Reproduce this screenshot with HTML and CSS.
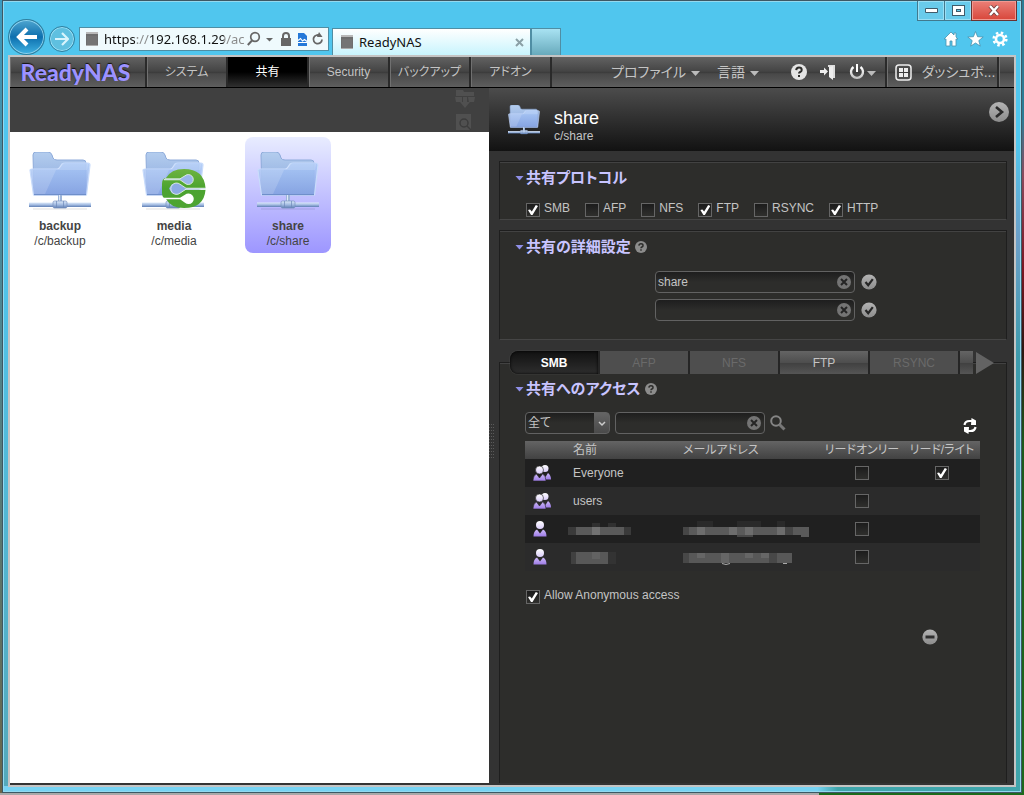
FILE: index.html
```html
<!DOCTYPE html>
<html lang="ja">
<head>
    <meta charset="UTF-8">
    <meta name="viewport" content="width=device-width, initial-scale=1.0">
    <title>ReadyNAS</title>
    <link rel="stylesheet" href="styles.css">
</head>
<body>

    <!-- shared icons -->
    <svg class="defs" aria-hidden="true">
        <defs>
            <linearGradient id="g-back" x1="0" y1="0" x2="0" y2="1">
                <stop offset="0" stop-color="#b4cdee"/>
                <stop offset="1" stop-color="#86a5dc"/>
            </linearGradient>
            <linearGradient id="g-front" x1="0" y1="0" x2="0" y2="1">
                <stop offset="0" stop-color="#a9c8f7"/>
                <stop offset="1" stop-color="#86a3e3"/>
            </linearGradient>
            <linearGradient id="g-bar" x1="0" y1="0" x2="0" y2="1">
                <stop offset="0" stop-color="#dce9fa"/>
                <stop offset="0.5" stop-color="#a5bde2"/>
                <stop offset="1" stop-color="#5f7fb5"/>
            </linearGradient>
            <linearGradient id="g-green" x1="0" y1="0" x2="0" y2="1">
                <stop offset="0" stop-color="#6db33f"/>
                <stop offset="0.5" stop-color="#4ba32f"/>
                <stop offset="1" stop-color="#4ea432"/>
            </linearGradient>
            <linearGradient id="g-gray" x1="0" y1="0" x2="0" y2="1">
                <stop offset="0" stop-color="#b4b4b4"/>
                <stop offset="1" stop-color="#8c8c8c"/>
            </linearGradient>
            <linearGradient id="g-head" x1="0" y1="0" x2="0" y2="1">
                <stop offset="0" stop-color="#ffffff"/>
                <stop offset="1" stop-color="#d9cbfa"/>
            </linearGradient>
            <linearGradient id="g-user" x1="0" y1="0" x2="0" y2="1">
                <stop offset="0" stop-color="#cdbaf8"/>
                <stop offset="1" stop-color="#9d7be6"/>
            </linearGradient>
            <linearGradient id="g-silver" x1="0" y1="0" x2="0" y2="1">
                <stop offset="0" stop-color="#ffffff"/>
                <stop offset="1" stop-color="#c4c4c4"/>
            </linearGradient>
        </defs>
        <symbol id="i-folder" viewBox="0 0 62 58">
            <path d="M4 3q0-3 3-3h12q3 0 4 3l1 3q1 2 4 2h26q3 0 3 3v32H5z" fill="url(#g-back)" stroke="#8eabda" stroke-width="1"/>
            <path d="M1 18q0-1 2-1h25q2 0 3-2l2-3q1-1 3-1h23q2 0 2 2L57.500 43H4.500z" fill="url(#g-front)" fill-opacity=".85" stroke="#c9dcfb" stroke-width="1.200"/>
            <path d="M2 18h26l5-6h26l-1 6H27L16 42H5z" fill="#fff" fill-opacity=".16"/>
            <path d="M5 42.500h52" stroke="#6f8fca"/>
            <path d="M29 43h4v8h-4z" fill="#9db5da"/>
            <path d="M30 43h1v8h-1z" fill="#dfe9f7"/>
            <path d="M0 50.500h62v4.500H0z" fill="url(#g-bar)"/>
            <rect x="24" y="49" width="14" height="7" rx="1.500" fill="url(#g-bar)" stroke="#7892bf" stroke-width=".7"/>
            <path d="M27.500 49v7M34.500 49v7" stroke="#6d88b8" stroke-width=".7"/>
            <path d="M4 57h54" stroke="#000" stroke-opacity=".12"/>
        </symbol>
        <symbol id="i-media" viewBox="0 0 64 58">
            <use href="#i-folder" width="62" height="58"/>
            <path d="M20 32q0-6 4-6 5-9 18-9 20 0 21.500 19H40l-3-4h-7l-3 4.500 3 5h7l3-3.500h23.500Q62 56 42 56q-13 0-18-9-4-1-4-6z" fill="url(#g-green)"/>
            <path d="M23 26.800h15l5-3a5 5 0 1 1 0 7.500l-5-3.500H22z" fill="#9bb7ea" stroke="#eef7e8" stroke-width=".8"/>
            <path d="M63.500 36.200H44l-6-4a5.700 5.700 0 1 0 0 9l6-4h19.500z" fill="#8dabe4" stroke="#eef7e8" stroke-width=".8"/>
            <path d="M20 45.800h18l5-3a5.300 5.300 0 1 1 0 8l-5-3.500H23z" fill="#fff"/>
        </symbol>
        <symbol id="i-help" viewBox="0 0 16 16">
            <circle cx="8" cy="8" r="8" fill="currentColor"/>
            <path d="M5.200 6.200Q5.400 3.600 8 3.600t2.700 2.300Q10.700 7.400 9.200 8 8 8.600 8 9.600" fill="none" stroke="#2d2d2b" stroke-width="2"/>
            <path d="M7 11h2v2H7z" fill="#2d2d2b"/>
        </symbol>
        <symbol id="i-clear" viewBox="0 0 14 14">
            <circle cx="7" cy="7" r="7" fill="#747474"/>
            <path d="M4 4l6 6M10 4l-6 6" stroke="#252525" stroke-width="2"/>
        </symbol>
        <symbol id="i-apply" viewBox="0 0 16 16">
            <circle cx="8" cy="8" r="7.600" fill="url(#g-gray)"/>
            <path d="M4.500 8l2.700 3.200 4.600-6" fill="none" stroke="#262626" stroke-width="2.200"/>
        </symbol>
        <symbol id="i-user" viewBox="0 0 14 18">
            <path d="M.5 16.500q0-5.500 3.500-7l3 4 3-4q3.500 1.500 3.500 7z" fill="url(#g-user)"/>
            <circle cx="7" cy="5" r="4" fill="url(#g-head)"/>
        </symbol>
        <symbol id="i-group" viewBox="0 0 18 18">
            <circle cx="12" cy="4.500" r="3.500" fill="url(#g-head)"/>
            <path d="M9 15.500V10l3.500 3L15 9q3 2 3 6.500z" fill="url(#g-user)"/>
            <path d="M0 17q0-5.500 3.500-7l3 4 3-4Q13 11.500 13 17z" fill="url(#g-user)" stroke="#222" stroke-width=".6"/>
            <circle cx="6.500" cy="6" r="4" fill="url(#g-head)" stroke="#222" stroke-width=".6"/>
        </symbol>
        <symbol id="i-nas" viewBox="0 0 12 16">
            <path d="M0 2h12v13H0z" fill="#6e6e6e"/>
            <path d="M0 1h12v2H0z" fill="#b9b9b9"/>
            <path d="M2 5v9M4 5v9M6 5v9M8 5v9M10 5v9" stroke="#858585" stroke-width=".6"/>
            <path d="M0 14.500h12" stroke="#aaa"/>
        </symbol>
    </svg>

    <div class="window">

        <header class="browser">
            <div class="browser-nav">
                <button class="back" aria-label="戻る">
                    <svg width="22" height="20" viewBox="0 0 22 20"><path d="M11 2L3 10l8 8M3.500 10H21" fill="none" stroke="#fff" stroke-width="4"/></svg>
                </button>
                <button class="forward" aria-label="進む">
                    <svg width="14" height="14" viewBox="0 0 14 14"><path d="M7 1l6 6-6 6M12.500 7H0" fill="none" stroke="#d8f4fc" stroke-width="2.200"/></svg>
                </button>
                <div class="address">
                    <svg width="12" height="16"><use href="#i-nas"/></svg>
                    <input type="text" class="url" value="https://192.168.1.29/ac" aria-label="アドレス">
                    <svg width="76" height="16" viewBox="0 0 76 16" fill="none">
                        <circle cx="8" cy="6" r="4.300" stroke="#666" stroke-width="1.700"/>
                        <path d="M5 9.500L.8 14" stroke="#666" stroke-width="2"/>
                        <path d="M19 7h7l-3.500 3.500z" fill="#666"/>
                        <path d="M34 7h10v8H34z" fill="#666"/>
                        <path d="M36 8V5q0-3 3-3t3 3v3" stroke="#666" stroke-width="2"/>
                        <path d="M51 2h6l3 3v10H51z" fill="#2478d8"/>
                        <path d="M51 9.500l2.500-2 2 2.500 2-1.500 2.500 2M51 11.500h9" stroke="#fff" stroke-width="1.200"/>
                        <path d="M75 8.500a4.300 4.300 0 1 1-2-3.800" stroke="#666" stroke-width="1.800"/>
                        <path d="M72 1l3.500 5H70z" fill="#666"/>
                    </svg>
                </div>
                <div class="tab">
                    <svg width="12" height="16"><use href="#i-nas"/></svg>
                    <span>ReadyNAS</span>
                    <button aria-label="タブを閉じる">
                        <svg width="9" height="9" viewBox="0 0 9 9"><path d="M1 1l7 7M8 1L1 8" stroke="#8ba0a6" stroke-width="2"/></svg>
                    </button>
                </div>
                <button class="new-tab" aria-label="新しいタブ"></button>
            </div>
            <div class="browser-right">
                <div class="caption">
                    <button aria-label="最小化"><svg width="13" height="5" viewBox="0 0 13 5"><path d="M.5.500h12v4H.5z" fill="#fff" stroke="#3f5b6a"/></svg></button>
                    <button aria-label="最大化"><svg width="13" height="11" viewBox="0 0 13 11"><path d="M2.500 2.500h8v6h-8z" fill="none" stroke="#3f5b6a" stroke-width="5"/><path d="M2.500 2.500h8v6h-8z" fill="none" stroke="#fff" stroke-width="3"/><path d="M4.500 4.500h4v2h-4z" fill="none" stroke="#3f5b6a"/></svg></button>
                    <button class="close" aria-label="閉じる"><svg width="12" height="11" viewBox="0 0 12 11"><path d="M2 1l8 9M10 1L2 10" stroke="#6d3b3b" stroke-width="4"/><path d="M2 1l8 9M10 1L2 10" stroke="#fff" stroke-width="2.500"/></svg></button>
                </div>
                <div class="tools">
                    <svg width="16" height="16" viewBox="0 0 16 16"><path d="M8 1L1 8h2v7h4v-5h2v5h4V8h2l-2-2V2h-2v2z" fill="#fff" stroke="#4a92ad" stroke-width=".8"/></svg>
                    <svg width="17" height="16" viewBox="0 0 17 16"><path d="M8.500.500l2.100 5.200 5.600.3-4.400 3.600 1.500 5.500-4.800-3.100-4.800 3.100 1.500-5.500L.8 6l5.600-.3z" fill="#fff" stroke="#4a92ad" stroke-width=".8"/></svg>
                    <svg width="16" height="16" viewBox="0 0 16 16"><circle cx="8" cy="8" r="6.300" fill="none" stroke="#fff" stroke-width="2.600" stroke-dasharray="2.470 2.480"/><circle cx="8" cy="8" r="4" fill="none" stroke="#fff" stroke-width="2.600"/></svg>
                </div>
            </div>
        </header>

        <main class="app">
            <nav class="menu">
                <a href="#" class="logo">ReadyNAS</a>
                <a href="#">システム</a>
                <a href="#" class="active">共有</a>
                <a href="#">Security</a>
                <a href="#">バックアップ</a>
                <a href="#">アドオン</a>
                <div class="menu-right">
                    <button class="profile">プロファイル <i class="caret"></i></button>
                    <button class="language">言語 <i class="caret"></i></button>
                    <button class="help" aria-label="ヘルプ"><svg width="16" height="16"><use href="#i-help"/></svg></button>
                    <button aria-label="ログアウト">
                        <svg width="16" height="16" viewBox="0 0 16 16"><path d="M8 1h7v13h-2V3H8z" fill="#ddd"/><path d="M9 3l4-1v14l-4-3zM0 6h4V3.500L8 7.500l-4 4V9H0z" fill="#eee"/></svg>
                    </button>
                    <button class="power" aria-label="電源">
                        <svg width="16" height="16" viewBox="0 0 16 16" fill="none"><path d="M4.500 3a6 6 0 1 0 7 0" stroke="url(#g-silver)" stroke-width="2.400"/><path d="M7 0h2v8H7z" fill="#fff"/></svg>
                        <i class="caret"></i>
                    </button>
                </div>
                <a href="#" class="dashboard">
                    <svg width="17" height="17" viewBox="0 0 17 17"><rect x="1" y="1" width="15" height="15" rx="3" fill="none" stroke="#eee" stroke-width="1.500"/><path d="M4 4h4v4H4zM9 4h4v4H9zM4 9h4v4H4zM9 9h4v4H9z" fill="#eee"/></svg>
                    <span>ダッシュボ...</span>
                </a>
                <div class="menu-end"></div>
            </nav>

            <div class="panes">
                <section class="shares">
                    <div class="toolbar">
                        <button aria-label="新規フォルダ" disabled>
                            <svg width="20" height="18" viewBox="0 0 20 18"><path d="M1 0h7l1 2h10v4H1zM0 7h7v5H1zM13 7h7l-1 5h-5zM8 7h4v5h3l-5 6-5-6h3z" fill="#505050"/></svg>
                        </button>
                        <button aria-label="検索" disabled>
                            <svg width="20" height="17" viewBox="0 0 20 17"><path d="M1 0h15v16H1z" fill="#505050"/><circle cx="9" cy="9" r="4" fill="none" stroke="#3c3c3c" stroke-width="1.500"/><path d="M12 12l4 4" stroke="#3c3c3c" stroke-width="1.500"/></svg>
                        </button>
                    </div>
                    <div class="share-list">
                        <a href="#" class="share">
                            <svg width="62" height="58"><use href="#i-folder"/></svg>
                            <strong>backup</strong>
                            <span>/c/backup</span>
                        </a>
                        <a href="#" class="share">
                            <svg width="64" height="58"><use href="#i-media"/></svg>
                            <strong>media</strong>
                            <span>/c/media</span>
                        </a>
                        <a href="#" class="share selected">
                            <svg width="62" height="58"><use href="#i-folder"/></svg>
                            <strong>share</strong>
                            <span>/c/share</span>
                        </a>
                    </div>
                </section>

                <section class="details">
                    <div class="details-head">
                        <svg width="32" height="30"><use href="#i-folder"/></svg>
                        <div class="details-title">
                            <h1>share</h1>
                            <p>c/share</p>
                        </div>
                        <button class="collapse" aria-label="詳細を閉じる">
                            <svg width="20" height="20" viewBox="0 0 20 20"><circle cx="10" cy="10" r="10" fill="url(#g-gray)"/><path d="M7 5l6 5-6 5" fill="none" stroke="#2a2a2a" stroke-width="2.600"/></svg>
                        </button>
                    </div>
                    <div class="grip"></div>

                    <div class="cards">
                        <div class="card protocols">
                            <h2>共有プロトコル</h2>
                            <div class="checks">
                                <label><input type="checkbox" checked>SMB</label>
                                <label><input type="checkbox">AFP</label>
                                <label><input type="checkbox">NFS</label>
                                <label><input type="checkbox" checked>FTP</label>
                                <label><input type="checkbox">RSYNC</label>
                                <label><input type="checkbox" checked>HTTP</label>
                            </div>
                        </div>

                        <div class="card advanced">
                            <h2>共有の詳細設定 <svg width="12" height="12"><use href="#i-help"/></svg></h2>
                            <div class="field-row">
                                <div class="field">
                                    <input type="text" value="share" aria-label="名前">
                                    <button aria-label="クリア"><svg width="14" height="14"><use href="#i-clear"/></svg></button>
                                </div>
                                <button aria-label="適用"><svg width="16" height="16"><use href="#i-apply"/></svg></button>
                            </div>
                            <div class="field-row">
                                <div class="field">
                                    <input type="text" value="" aria-label="説明">
                                    <button aria-label="クリア"><svg width="14" height="14"><use href="#i-clear"/></svg></button>
                                </div>
                                <button aria-label="適用"><svg width="16" height="16"><use href="#i-apply"/></svg></button>
                            </div>
                        </div>

                        <div class="card access">
                            <div class="tabs">
                                <button class="current">SMB</button>
                                <button disabled>AFP</button>
                                <button disabled>NFS</button>
                                <button>FTP</button>
                                <button disabled>RSYNC</button>
                                <button class="cut" aria-label="HTTP"></button>
                                <button class="next" aria-label="次へ">
                                    <svg width="18" height="22" viewBox="0 0 18 22"><path d="M0 0l18 11L0 22z" fill="#636363"/></svg>
                                </button>
                            </div>

                            <h2>共有へのアクセス <svg width="12" height="12"><use href="#i-help"/></svg></h2>

                            <div class="filter">
                                <div class="select">
                                    <select aria-label="種類"><option>全て</option></select>
                                    <svg width="8" height="6" viewBox="0 0 8 6"><path d="M1 1l3 3 3-3" fill="none" stroke="#ccc" stroke-width="1.500"/></svg>
                                </div>
                                <div class="field">
                                    <input type="text" aria-label="検索">
                                    <button aria-label="クリア"><svg width="14" height="14"><use href="#i-clear"/></svg></button>
                                </div>
                                <button aria-label="検索">
                                    <svg width="16" height="16" viewBox="0 0 16 16" fill="none"><circle cx="6" cy="6" r="4.800" stroke="#858585" stroke-width="2"/><path d="M9.500 9.500l5 5" stroke="#777" stroke-width="3"/></svg>
                                </button>
                                <button class="refresh" aria-label="更新">
                                    <svg width="14" height="16" viewBox="0 0 14 16" fill="none"><path d="M1.500 7q.5-4 5-4H9M12.500 9q-.5 4-5 4H5" stroke="#fff" stroke-width="2.200"/><path d="M8.500 0L13 2.500V7H8zM5.500 16L1 13.500V9h5z" fill="#fff"/></svg>
                                </button>
                            </div>

                            <table>
                                <colgroup><col class="c-icon"><col class="c-name"><col><col class="c-ro"><col class="c-rw"></colgroup>
                                <thead>
                                    <tr><th></th><th>名前</th><th>メールアドレス</th><th>リードオンリー</th><th>リード/ライト</th></tr>
                                </thead>
                                <tbody>
                                    <tr>
                                        <td><svg width="18" height="18"><use href="#i-group"/></svg></td>
                                        <td>Everyone</td>
                                        <td></td>
                                        <td><input type="checkbox" aria-label="Everyone リードオンリー"></td>
                                        <td><input type="checkbox" aria-label="Everyone リード/ライト" checked></td>
                                    </tr>
                                    <tr>
                                        <td><svg width="18" height="18"><use href="#i-group"/></svg></td>
                                        <td>users</td>
                                        <td></td>
                                        <td><input type="checkbox" aria-label="users リードオンリー"></td>
                                        <td></td>
                                    </tr>
                                    <tr>
                                        <td><svg width="14" height="18"><use href="#i-user"/></svg></td>
                                        <td class="masked">
                                            <svg width="63" height="16" viewBox="0 0 63 16"><path d="M0 6h8v8H0zM56 6h7v8h-7z" fill="#3a3a3a"/><path d="M8 6h16v8H8zM32 6h24v8H32z" fill="#5a5a5a"/><path d="M24 6h8v8h-8z" fill="#727272"/><path d="M24 2h8v4h-8zM40 2h8v4h-8z" fill="#303030"/></svg>
                                        </td>
                                        <td>
                                            <svg width="126" height="16" viewBox="0 0 126 16"><path d="M0 6h6v8H0zM102 6h8v8h-8z" fill="#464646"/><path d="M6 6h96v8H6zM110 6h16v10h-8v-2h-8z" fill="#5a5a5a"/><path d="M14 6h8v8h-8zM46 6h8v8h-8zM62 6h8v8h-8zM94 6h8v8h-8z" fill="#6d6d6d"/><path d="M14 0h16v6H14zM54 0h24v6H54zM94 0h8v6h-8z" fill="#2a2a2a"/><path d="M54 14h16v2H54z" fill="#484848"/></svg>
                                        </td>
                                        <td><input type="checkbox" aria-label="ユーザー1 リードオンリー"></td>
                                        <td></td>
                                    </tr>
                                    <tr>
                                        <td><svg width="14" height="18"><use href="#i-user"/></svg></td>
                                        <td class="masked">
                                            <svg width="63" height="16" viewBox="0 0 63 16"><path d="M3 3h5v12H3z" fill="#404040"/><path d="M8 3h32v12H8z" fill="#585858"/><path d="M24 3h8v7h-8z" fill="#626262"/><path d="M40 3h8v12h-8z" fill="#333"/></svg>
                                        </td>
                                        <td>
                                            <svg width="126" height="16" viewBox="0 0 126 16"><path d="M0 4h6v10H0zM86 4h8v10h-8z" fill="#484848"/><path d="M6 4h80v10H6zM94 4h15v10H94z" fill="#585858"/><path d="M14 4h8v5h-8zM38 4h8v10h-8zM62 4h8v5h-8zM78 4h8v5h-8z" fill="#666"/><path d="M39 14.500q4 2 8 0M100 14.500h4" fill="none" stroke="#aaa"/></svg>
                                        </td>
                                        <td><input type="checkbox" aria-label="ユーザー2 リードオンリー"></td>
                                        <td></td>
                                    </tr>
                                </tbody>
                            </table>

                            <div class="checks anonymous">
                                <label><input type="checkbox" checked>Allow Anonymous access</label>
                            </div>
                            <button class="remove" aria-label="削除">
                                <svg width="16" height="16" viewBox="0 0 16 16"><circle cx="8" cy="8" r="7.600" fill="url(#g-gray)"/><path d="M3.500 6.500h9v3h-9z" fill="#303030"/></svg>
                            </button>
                        </div>
                    </div>
                </section>
            </div>
        </main>
    </div>

</body>
</html>
```
FILE: styles.css
```css
* {
    box-sizing: border-box;
}
body {
    display: flex;
    min-height: 100vh;
    margin: 0;
    padding: 0 2px 2px;
    background:
        linear-gradient(to right, #a9a9a9 80%, #1c6a1c 80%) bottom / 100% 2px no-repeat,
        linear-gradient(#2b7d96 15%, #8a4a5c 22%, #7a1622 34%, #2c1712 44%, #1c5a1c 56%, #1c6a1c) right / 2px 100% no-repeat,
        linear-gradient(#3a9bc0, #6b6548);
    color: #c4c4c4;
    font-family: "Liberation Sans", "Noto Sans CJK JP", sans-serif;
    font-size: 12px;
    line-height: 16px;
}
button, input, select {
    font: inherit;
    color: inherit;
}
button {
    padding: 0;
    border: 0;
    background: none;
}
a {
    color: inherit;
    text-decoration: none;
}
svg {
    display: block;
    flex: none;
}
h1, h2, p {
    margin: 0;
    font-weight: normal;
}
.defs {
    position: absolute;
    width: 0;
    height: 0;
}

/* browser window */
.window {
    flex: 1;
    display: flex;
    flex-direction: column;
    min-width: 0;
    padding: 0 5px 5px;
    border: 1px solid #3d5864;
    box-shadow: inset 0 0 0 1px #93d9ef;
    background:
        linear-gradient(to right, #76d3f3 80%, #3fa5ab 82%) bottom / 100% 6px no-repeat,
        linear-gradient(#50c6ee 18%, #6c9fc8 30%, #3d9aac 45%, #3fa5ab) right / 8px 100% no-repeat,
        linear-gradient(#50c6ee 30%, #54a9ba);
}
.browser {
    display: flex;
    justify-content: space-between;
    height: 54px;
    margin: 0 -1px 0 -2px;
}
.browser-nav {
    display: flex;
    align-items: flex-end;
    padding-left: 2px;
}
.back, .forward {
    display: flex;
    align-items: center;
    justify-content: center;
    border: 1px solid #2f7f9f;
    border-radius: 50%;
}
.back {
    width: 37px;
    height: 36px;
    background: linear-gradient(#4fa6d0, #0d6fae 50%, #3fb2e2);
    box-shadow: inset 0 0 0 1px #8cd2ee;
}
.forward {
    width: 26px;
    height: 26px;
    margin: 0 4px 3px;
    background: #5fc0e0;
    box-shadow: inset 0 0 0 1px #9be0f5;
}
.address {
    display: flex;
    align-items: center;
    width: 250px;
    height: 24px;
    margin-bottom: 4px;
    padding: 0 5px 0 6px;
    border: 1px solid #4f8ea4;
    background: #effafd;
}
.url {
    flex: 1;
    min-width: 0;
    padding: 0 0 0 6px;
    border: 0;
    background: linear-gradient(to right, #111 37px, #888 37px, #888 51px, #111 51px, #111 126px, #888 126px);
    background-clip: text;
    -webkit-background-clip: text;
    color: transparent;
    font-family: "Noto Sans", sans-serif;
    font-size: 13px;
}
.tab {
    display: flex;
    align-items: center;
    gap: 6px;
    width: 199px;
    height: 27px;
    margin-left: 3px;
    padding: 0 6px 0 8px;
    border: 1px solid #4f8ea4;
    border-bottom: 0;
    background: linear-gradient(#fff, #c8f4fd);
    color: #111;
    font-family: "Noto Sans", sans-serif;
    font-size: 13px;
}
.tab button {
    margin-left: auto;
}
.new-tab {
    width: 30px;
    height: 27px;
    border: 1px solid #4f8ea4;
    border-bottom: 0;
    background: linear-gradient(#a8e2f2, #68aabc);
}
.browser-right {
    display: flex;
    flex-direction: column;
    align-items: flex-end;
}
.caption {
    display: flex;
}
.caption button {
    display: flex;
    align-items: center;
    justify-content: center;
    width: 27px;
    height: 20px;
    border: 1px solid #41798e;
    border-top: 0;
    border-right: 0;
    background: #69cbeb;
    box-shadow: inset 0 0 0 1px #9adff5;
}
.caption .close {
    width: 46px;
    border: 1px solid #6b3230;
    border-top: 0;
    background: linear-gradient(#ea8078, #d8463a);
    box-shadow: inset 0 0 0 1px #f09a92;
}
.tools {
    display: flex;
    gap: 8px;
    padding: 10px 9px 0 0;
}

/* admin page */
.app {
    flex: 1;
    display: flex;
    flex-direction: column;
    padding-bottom: 2px;
    border: 2px solid #c4c4c4;
    background: #333;
}
.menu {
    display: flex;
    height: 31px;
    border-bottom: 1px solid #000;
    background: linear-gradient(#626262, #444 48%, #383838 50%, #484848 56%, #5e5e5e);
    font-feature-settings: "palt";
}
.menu a, .menu-end {
    display: flex;
    align-items: center;
    justify-content: center;
    flex: none;
    width: 81px;
    border-right: 2px solid #2a2a2a;
    box-shadow: inset 1px 0 0 #707070;
}
.menu .logo {
    width: 137px;
    padding-right: 4px;
    color: #9c92ff;
    font-family: Lato, sans-serif;
    font-size: 23px;
    font-weight: 900;
    text-shadow: 0 -1px 1px #111;
}
.menu .active {
    background: linear-gradient(#000 50%, #303030);
    box-shadow: none;
    color: #fff;
}
.menu-right {
    display: flex;
    align-items: center;
    margin-left: auto;
    padding-right: 9px;
    border-right: 2px solid #2a2a2a;
}
.menu-right button {
    display: flex;
    align-items: center;
    gap: 5px;
    margin-left: 13px;
}
.menu-right .profile, .menu-right .language, .dashboard span {
    font-size: 14px;
}
.menu-right .language {
    margin-left: 17px;
}
.menu-right .help {
    margin-left: 32px;
    color: #e4e4e4;
}
.menu-right .power {
    gap: 2px;
}
.caret {
    width: 9px;
    height: 5px;
    margin-top: 3px;
    background: #bbb;
    clip-path: polygon(0 0, 100% 0, 50% 100%);
}
.menu .dashboard {
    gap: 10px;
    width: 112px;
    padding-left: 6px;
}
.menu .menu-end {
    width: 15px;
    border-right: 0;
}
.panes {
    flex: 1;
    display: flex;
}

/* share list */
.shares {
    flex: 1;
    min-width: 0;
    background: #fff;
}
.toolbar {
    display: flex;
    flex-direction: column;
    align-items: flex-end;
    gap: 6px;
    height: 44px;
    padding: 2px 14px 0 0;
    background: #404040;
}
.share-list {
    display: flex;
    flex-wrap: wrap;
    gap: 28px;
    padding: 5px 7px;
}
.share {
    display: flex;
    flex-direction: column;
    align-items: center;
    width: 86px;
    height: 116px;
    padding-top: 15px;
    border-radius: 8px;
    color: #444;
    line-height: 15px;
}
.share strong {
    margin-top: 9px;
}
.share.selected {
    background: linear-gradient(#e8ecff, #9d96ff);
}

/* share details */
.details {
    position: relative;
    flex: 0 0 525px;
    display: flex;
    flex-direction: column;
}
.details-head {
    display: flex;
    gap: 14px;
    height: 63px;
    padding: 17px 5px 0 19px;
    background: linear-gradient(#4c4c4c, #121212);
}
.details-title {
    flex: 1;
    padding-top: 3px;
}
.details-title h1 {
    color: #fff;
    font-size: 18px;
    line-height: 20px;
}
.collapse {
    align-self: flex-start;
    margin-top: -3px;
}
.grip {
    position: absolute;
    top: 48%;
    left: 0;
    width: 5px;
    height: 36px;
    background:
        linear-gradient(#333 2px, transparent 2px) 0 0 / 100% 3px,
        linear-gradient(to right, #5a5a5a 1px, transparent 1px) 0 0 / 2px 100%;
}
.cards {
    flex: 1;
    display: flex;
    flex-direction: column;
    padding: 10px 7px 0 10px;
}
.card {
    padding: 6px 0 0;
    margin-bottom: 10px;
    border: 1px solid #1e1e1e;
    border-bottom-color: #454545;
    box-shadow: inset 0 1px 0 #424242;
    background: #2d2d2b;
}
.card h2 {
    display: flex;
    align-items: center;
    padding-left: 15px;
    color: #c8c4ff;
    font-size: 15px;
    font-weight: bold;
    line-height: 20px;
    font-feature-settings: "palt";
}
.card h2::before {
    content: "";
    width: 9px;
    height: 5px;
    margin-right: 2px;
    background: #8f8fe8;
    clip-path: polygon(0 0, 100% 0, 50% 100%);
}
.card h2 svg {
    margin-left: 4px;
    color: #8c8c8c;
}
.checks {
    display: flex;
    gap: 15px;
    padding-left: 26px;
}
.checks label {
    display: flex;
    gap: 4px;
}
.protocols .checks {
    margin-top: 12px;
    padding-bottom: 2px;
}
input[type=checkbox] {
    appearance: none;
    width: 14px;
    height: 14px;
    margin: 0;
    border: 1px solid #666;
    background: linear-gradient(#1c1c1c, #2f2f2d);
}
input[type=checkbox]:checked::before {
    content: "";
    display: block;
    width: 10px;
    height: 10px;
    margin: 1px;
    background: #fff;
    clip-path: polygon(0 50%, 20% 45%, 38% 65%, 78% 0, 100% 10%, 45% 100%, 30% 100%);
}
.checks input[type=checkbox] {
    margin-top: 3px;
}
.advanced {
    padding-bottom: 18px;
}
.field-row {
    display: flex;
    align-items: center;
    gap: 6px;
    margin-top: 6px;
    padding-left: 155px;
}
h2 + .field-row {
    margin-top: 14px;
}
.field {
    display: flex;
    align-items: center;
    width: 200px;
    height: 22px;
    padding-right: 3px;
    border: 1px solid #626262;
    border-radius: 4px;
    background: linear-gradient(#1e1e1e, #2d2d2b 50%);
}
.field input {
    flex: 1;
    min-width: 0;
    padding: 0 2px;
    border: 0;
    background: none;
}

/* access tab */
.access {
    flex: 1;
    margin: 12px 0 0;
    padding: 0;
    border-bottom: 0;
}
.tabs {
    display: flex;
    margin: -12px 12px 0 10px;
}
.tabs button {
    width: 90px;
    height: 23px;
    border-right: 2px solid #252525;
    background: linear-gradient(#646464, #4e4e4e 50%, #404040 52%, #555);
}
.tabs button:disabled {
    background: #4e4e4e;
    color: #6a6a6a;
}
.tabs .current {
    border-radius: 8px 0 0 8px;
    background: linear-gradient(#111, #2e2e2e);
    box-shadow: inset 0 0 3px #000, 0 0 1px #777;
    color: #fff;
    font-weight: bold;
}
.tabs .cut {
    width: 13px;
    border-right: 0;
}
.tabs .next {
    width: 18px;
    margin-left: 3px;
    border: 0;
    background: none;
}
.access h2 {
    margin-top: 5px;
}
.filter {
    display: flex;
    align-items: center;
    gap: 5px;
    margin: 13px 26px 7px 25px;
}
.select {
    position: relative;
}
.select select {
    display: block;
    appearance: none;
    width: 85px;
    height: 22px;
    padding: 0 18px 0 2px;
    border: 1px solid #626262;
    border-radius: 4px;
    background: linear-gradient(#646464, #4a4a4a) right / 15px 100% no-repeat, linear-gradient(#1e1e1e, #2d2d2b 50%);
    font-feature-settings: "palt";
}
.select svg {
    position: absolute;
    top: 9px;
    right: 4px;
    pointer-events: none;
}
.filter .field {
    width: 150px;
}
.filter .refresh {
    margin: 6px 3px 0 auto;
}
table {
    width: calc(100% - 51px);
    margin-left: 25px;
    border-collapse: collapse;
    table-layout: fixed;
}
.c-icon {
    width: 43px;
}
.c-name {
    width: 115px;
}
.c-ro {
    width: 84px;
}
.c-rw {
    width: 76px;
}
th, td {
    padding: 0;
    text-align: left;
}
thead tr {
    height: 18px;
    background: linear-gradient(#646464, #424242);
}
th {
    font-weight: normal;
    font-feature-settings: "palt";
    white-space: nowrap;
}
tbody tr {
    height: 28px;
    background: #2b2b2b;
}
tbody tr:nth-child(odd) {
    background: #202020;
}
td:first-child {
    padding-left: 8px;
}
th:nth-child(2), td:nth-child(2) {
    padding-left: 5px;
}
td.masked:nth-child(2) {
    padding-left: 0;
}
th:nth-child(n+4), td:nth-child(n+4) {
    text-align: center;
}
td input[type=checkbox] {
    display: block;
    margin: 0 auto;
}
.anonymous {
    margin-top: 16px;
}
.remove {
    display: block;
    margin: 25px 68px 0 auto;
}
```
